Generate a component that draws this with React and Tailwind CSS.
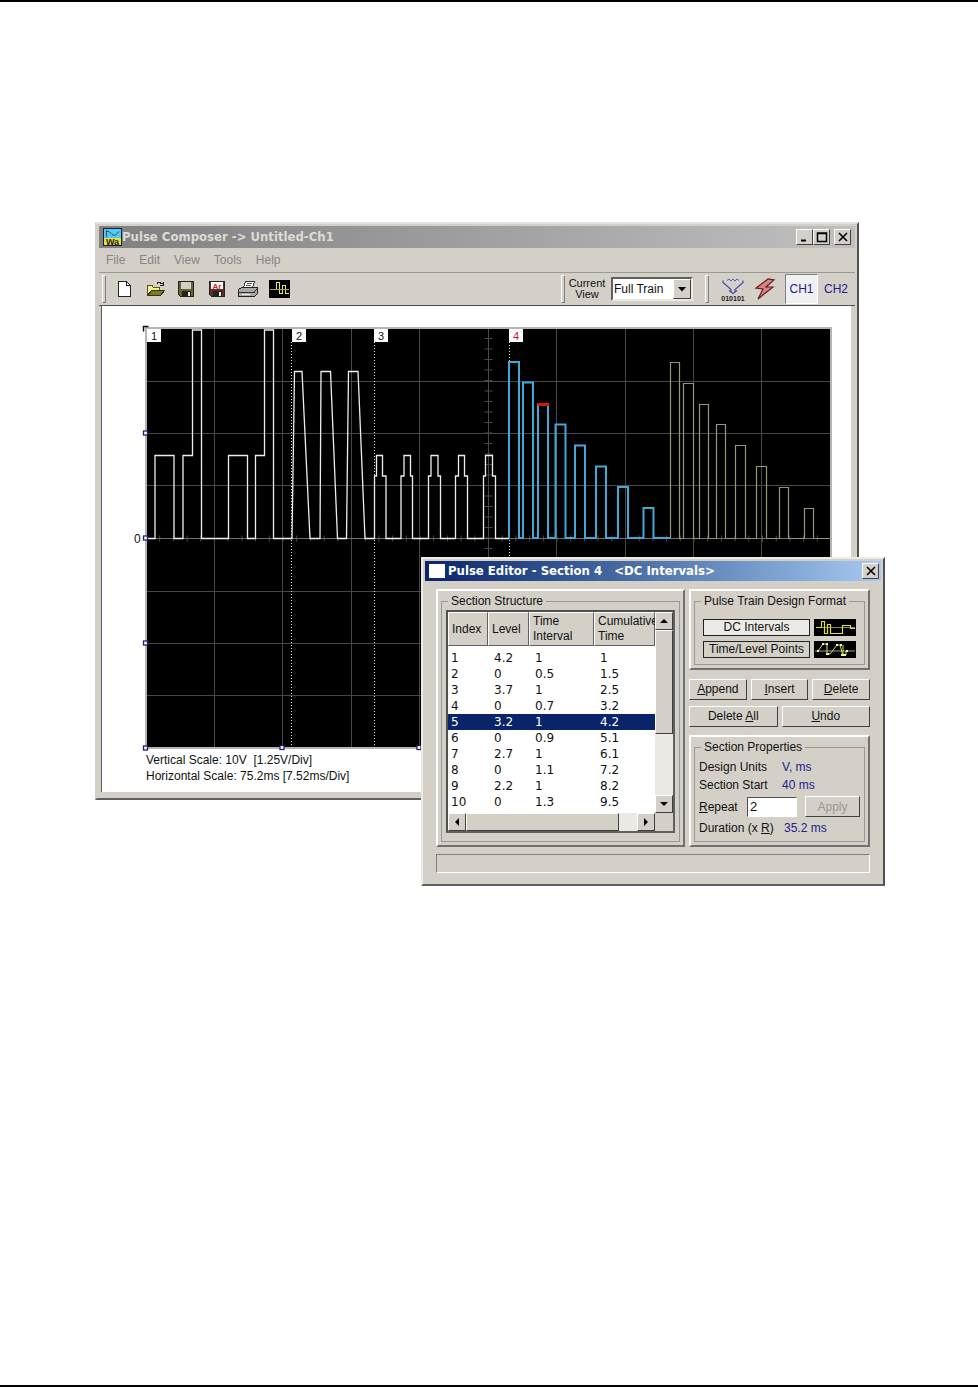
import React from "react";

const raised =
  "border border-t-white border-l-white border-r-[#404040] border-b-[#404040] bg-[#d4d0c8]";

const WHITE_WAVE =
  "M146 538.5H155V455.5H174V538.5H183V455.5H192.5V330H201.5V538.5H228.5V455.5H247.5V538.5H255.5V455.5H264.5V330H273.5V538.5H292L294.5 371.5H302L310 538.5H320L321 371.5H330.5L337.5 538.5H346.5L348.5 371.5H358L365 538.5H374.5V476H376.5V455.5H382.5V476H386V538.5H401V476H404V455.5H410.5V476H412.5V538.5H428.5V476H431V455.5H438V476H440.5V538.5H455.5V476H458.5V455.5H464.5V476H467.5V538.5H483.5V476H485.5V455.5H492.5V476H495.5V538.5H509";
const BLUE_WAVE =
  "M509 538V362H519V538H523V382.5H533V538H538V404.5H548V538H555.5V424.5H565.5V538H575V445.5H585V538H596V466.5H606V538H618V487H628V538H643.5V508H653.5V538H670";
const OLIVE_WAVE =
  "M670.5 538.5V362.5H679.5V538.5H683.5V383.5H693.5V538.5H699.5V404.5H708.5V538.5H716.5V424.5H725.5V538.5H735.5V445.5H745.5V538.5H756.5V466.5H766.5V538.5H779.5V487.5H788.5V538.5H804.5V508.5H813.5V538.5H831";

const gridX = [214.5, 282.5, 351.5, 419.5, 488.5, 556.5, 625.5, 693.5, 761.5];
const gridY = [381.5, 433.5, 485.5, 538.5, 591.5, 643.5, 695.5];
const sections = [
  { n: "1", x: 147 },
  { n: "2", x: 292 },
  { n: "3", x: 374 },
  { n: "4", x: 509 },
];

function Graph() {
  const ticksX = Array.from({ length: 49 }, (_, i) => 146 + (i + 1) * 13.7);
  const ticksY = Array.from({ length: 39 }, (_, i) => 328 + (i + 1) * 10.5);
  return (
    <svg viewBox="130 322 706 430" className="block w-full" role="img" aria-label="Pulse train">
      <rect x="146" y="328" width="685" height="420" fill="#000" />
      <g stroke="#484848" strokeWidth="1">
        {gridX.map((x) => <path key={x} d={`M${x} 329V747`} />)}
        {gridY.map((y) => <path key={y} d={`M147 ${y}H830`} />)}
        {ticksX.map((x) => <path key={x} d={`M${x} 535.5V541.5`} />)}
        {ticksY.map((y) => <path key={y} d={`M484.5 ${y}H492.5`} />)}
      </g>
      <path d="M147 538.5H830" stroke="#707070" />
      <g stroke="#e0e0e0" strokeDasharray="1 2">
        <path d="M291.5 342V747" />
        <path d="M374.5 342V747" />
        <path d="M509.5 342V747" />
      </g>
      <rect x="146" y="328" width="685" height="420" fill="none" stroke="#b4b4b4" strokeWidth="2" />
      <path d={WHITE_WAVE} fill="none" stroke="#ededed" strokeWidth="1.3" />
      <path d={OLIVE_WAVE} fill="none" stroke="#96967a" strokeWidth="1.2" />
      <path d={BLUE_WAVE} fill="none" stroke="#3fa9d8" strokeWidth="2" />
      <path d="M537.5 404.5H549" stroke="#e01010" strokeWidth="3" />
      {sections.map((s) => (
        <g key={s.n}>
          <rect x={s.x} y="329" width="14" height="13" fill="#fff" />
          <text x={s.x + 7} y="340" textAnchor="middle" fontSize="11" fontFamily="Liberation Sans, sans-serif" fill={s.n === "4" ? "#c01848" : "#111"}>
            {s.n}
          </text>
        </g>
      ))}
      <text x="134" y="543" fontSize="12" fontFamily="Liberation Sans, sans-serif" fill="#111">0</text>
      <g fill="#fff" stroke="#20206a" strokeWidth="1.3">
        {[433, 538, 643, 748].map((y) => <rect key={y} x="143.5" y={y - 2} width="4" height="4" />)}
        {[282, 419].map((x) => <rect key={x} x={x - 2} y="745.5" width="4" height="4" />)}
      </g>
      <path d="M143.5 331.5V326.5H148.5" fill="none" stroke="#111" strokeWidth="1.5" />
    </svg>
  );
}

function ToolIcon({ label, children, wide }) {
  return (
    <button type="button" aria-label={label} className={wide ? "h-6 w-6" : "h-6 w-5"}>
      <svg viewBox={wide ? "0 0 24 24" : "0 0 20 24"} className="block h-6 w-full" shapeRendering="crispEdges">
        {children}
      </svg>
    </button>
  );
}

function Grip() {
  return <div className="h-7 w-1 border border-t-white border-l-white border-r-[#808080] border-b-[#808080]" />;
}

function CaptionButton({ label, children }) {
  return (
    <button type="button" aria-label={label} className={`flex h-4 w-[17px] items-center justify-center ${raised}`}>
      <svg viewBox="0 0 12 12" className="h-3 w-3" fill="none" stroke="#000">
        {children}
      </svg>
    </button>
  );
}

function MainWindow() {
  return (
    <section className="border-2 border-t-[#e4e2dc] border-l-[#d4d0c8] border-r-[#505050] border-b-[#606060] bg-[#d4d0c8] p-[2px]">
      <header className="flex h-[22px] items-center bg-linear-to-r from-[#808080] to-[#c0c0c0] pr-1 pl-1">
        <svg viewBox="0 0 19 18" className="h-[18px] w-[19px]">
          <rect width="19" height="18" fill="#102040" />
          <rect x="1" y="1" width="17" height="9" fill="#58c8f0" />
          <rect x="1" y="10" width="17" height="7" fill="#e8e030" />
          <path d="M3.5 2V9M3.5 3.5H6L9 6.5L12 7.5L16 3.5" fill="none" stroke="#205878" />
          <text x="9.5" y="17" textAnchor="middle" fontSize="9" fontWeight="bold" fontFamily="Liberation Sans, sans-serif" fill="#222">Wa</text>
        </svg>
        <h1 className="flex-1 font-['DejaVu_Sans_Condensed','DejaVu_Sans',sans-serif] text-[13px] font-bold whitespace-pre text-[#dedbd4]">
          Pulse Composer -&gt; Untitled-Ch1
        </h1>
        <div className="flex">
          <CaptionButton label="Minimize"><path d="M2 9.5H7" strokeWidth="2" /></CaptionButton>
          <CaptionButton label="Maximize"><path d="M1.5 2H10.5V10.5H1.5ZM1.5 2.5H10.5" strokeWidth="1.5" /></CaptionButton>
          <div className="w-1" />
          <CaptionButton label="Close"><path d="M2 2L10 10M10 2L2 10" strokeWidth="1.6" /></CaptionButton>
        </div>
      </header>
      <nav className="flex h-6 items-center gap-[13px] pl-[7px] text-[12px] text-[#858585]">
        {["File", "Edit", "View", "Tools", "Help"].map((m) => (
          <button key={m} type="button" className="pr-px">{m}</button>
        ))}
      </nav>
      <div className="flex h-[34px] items-center border-t border-b border-t-[#9a9a94] border-b-[#505050] pl-[3px]">
        <Grip />
        <div className="ml-2 flex flex-1 items-center gap-[11px]">
          <ToolIcon label="New">
            <path d="M4.5 4.5H12.5L16.5 8.5V19.5H4.5Z" fill="#fff" stroke="#222" />
            <path d="M12.5 4.5V8.5H16.5" fill="none" stroke="#222" />
          </ToolIcon>
          <ToolIcon label="Open">
            <path d="M2.5 18V8.5H7L8.5 10.5H14.5V13" fill="#f0f090" stroke="#555520" />
            <path d="M2.5 18.5L6.5 13.5H19.5L15.5 18.5Z" fill="#7c7c20" stroke="#333310" />
            <path d="M11.5 6.5H12.5V5.5H15.5V6.5H17.5M18.5 4.5V8.5H14.5" fill="none" stroke="#222" />
          </ToolIcon>
          <ToolIcon label="Save">
            <path d="M2.5 4.5H17.5V19.5H4.5L2.5 17.5Z" fill="#66662c" stroke="#222" />
            <path d="M5 5H15V12H5Z" fill="#d4d0c8" />
            <path d="M6 14H15V20H6Z" fill="#222" />
            <path d="M12 15H14V19H12Z" fill="#eee" />
          </ToolIcon>
          <ToolIcon label="Save as">
            <path d="M2.5 4.5H17.5V19.5H4.5L2.5 17.5Z" fill="#5c3028" stroke="#222" />
            <path d="M4 5H16V12H4Z" fill="#fff" />
            <text x="10" y="12" textAnchor="middle" fontSize="8" fontWeight="bold" fontFamily="Liberation Sans, sans-serif" fill="#d02020">Ar</text>
            <path d="M6 14H15V20H6Z" fill="#222" />
            <path d="M12 15H14V19H12Z" fill="#eee" />
          </ToolIcon>
          <ToolIcon label="Print">
            <path d="M5 11L8 4H17L14 11Z" fill="#fff" stroke="#333" />
            <path d="M9 6.5H14M8 8.5H13" stroke="#555" />
            <path d="M0.5 12.5L3.5 10.5H19.5V16.5L16.5 19.5H0.5Z" fill="#a8a8a8" stroke="#222" />
            <path d="M1 15.5H16L19 12" fill="none" stroke="#333" />
            <path d="M4 17.5H12" stroke="#eee" />
          </ToolIcon>
          <ToolIcon label="Pulse editor" wide>
            <rect x="0" y="3" width="21" height="18" fill="#000" />
            <path d="M1 12.5H7.5V5.5H10.5V16.5H13.5V8.5H16.5V16.5H20" fill="none" stroke="#e8e858" />
            <path d="M1 12.5H20" stroke="#a8a850" />
          </ToolIcon>
        </div>
        <Grip />
        <label htmlFor="view" className="ml-[2px] w-10 text-center text-[11px] leading-[11px]">Current View</label>
        <div className="relative mr-3 ml-1 h-6 w-[82px] border-2 border-t-[#606060] border-l-[#606060] border-r-[#eceae4] border-b-[#eceae4] bg-white">
          <select id="view" className="block h-5 w-full appearance-none bg-transparent pl-px text-[12px] leading-5 outline-none">
            <option>Full Train</option>
          </select>
          <span className={`pointer-events-none absolute top-0 right-0 flex h-5 w-[18px] items-center justify-center ${raised}`}>
            <svg viewBox="0 0 8 5" className="h-[5px] w-2"><path d="M0 0H8L4 4.5Z" /></svg>
          </span>
        </div>
        <Grip />
        <button type="button" aria-label="Digital output" className="ml-3 h-6 w-6">
          <svg viewBox="0 0 24 24" className="h-6 w-6">
            <path d="M6 3.5L8 2L10 4L12 2L14 4L16 2L18 3.5" fill="none" stroke="#5060c0" />
            <path d="M2 3.5V5.5L10 12.5V15M22 3.5V5.5L14 12.5V15M8 13.5L12 16.5L16 13.5" fill="none" stroke="#4848a8" strokeWidth="1.2" />
            <text x="12" y="23.5" textAnchor="middle" fontSize="7" fontWeight="bold" fontFamily="Liberation Sans, sans-serif" fill="#222">010101</text>
          </svg>
        </button>
        <button type="button" aria-label="Trigger" className="ml-2 h-6 w-6">
          <svg viewBox="0 0 24 24" className="h-6 w-6">
            <path d="M15 2L3 11L10 12L5 22L20 10L13 10L21 3Z" fill="#e08080" stroke="#5c2020" strokeWidth="1.2" />
          </svg>
        </button>
        <button type="button" className="ml-2 h-[30px] w-[33px] border border-t-[#808080] border-l-[#808080] border-r-white border-b-white bg-[#f0eff2] text-[12px] text-[#20208c]">CH1</button>
        <button type="button" className="mr-[7px] ml-[6px] text-[12px] text-[#20208c]">CH2</button>
      </div>
      <div className="mr-1 mb-1 ml-[2px] border-l border-l-[#606060] bg-white pt-4 pr-[15px] pb-2 pl-7">
        <Graph />
        <div className="pl-4 text-[12px] leading-4 whitespace-pre">
          <p>Vertical Scale: 10V  [1.25V/Div]</p>
          <p>Horizontal Scale: 75.2ms [7.52ms/Div]</p>
        </div>
      </div>
    </section>
  );
}

const rows = [
  ["1", "4.2", "1", "1"],
  ["2", "0", "0.5", "1.5"],
  ["3", "3.7", "1", "2.5"],
  ["4", "0", "0.7", "3.2"],
  ["5", "3.2", "1", "4.2"],
  ["6", "0", "0.9", "5.1"],
  ["7", "2.7", "1", "6.1"],
  ["8", "0", "1.1", "7.2"],
  ["9", "2.2", "1", "8.2"],
  ["10", "0", "1.3", "9.5"],
];

function Group({ title, children }) {
  return (
    <div className="border-2 border-t-white border-l-white border-r-[#707070] border-b-[#707070] p-[3px]">
      <fieldset className="border border-[#989894]">
        <legend className="ml-[6px] px-[3px] text-[12px] leading-[14px]">{title}</legend>
        {children}
      </fieldset>
    </div>
  );
}

function ScrollButton({ label, d }) {
  return (
    <button type="button" aria-label={label} className={`flex h-[18px] w-[18px] shrink-0 items-center justify-center ${raised}`}>
      <svg viewBox="0 0 8 8" className="h-2 w-2"><path d={d} /></svg>
    </button>
  );
}

function SectionTable() {
  const head = "border-r border-b border-r-[#606060] border-b-[#606060] border-t border-l border-t-white border-l-white p-0 pl-[3px] text-left font-normal";
  return (
    <div className="mx-1 mt-[2px] mb-2 border-2 border-t-[#505050] border-l-[#505050] border-r-[#606060] border-b-[#606060] bg-white">
      <div className="flex">
        <div className="min-w-0 flex-1 overflow-hidden pb-[3px]">
          <table className="w-full table-fixed border-separate border-spacing-0 text-[12px]">
            <colgroup>
              <col className="w-10" />
              <col className="w-[41px]" />
              <col className="w-[65px]" />
              <col />
            </colgroup>
            <thead className="bg-[#d4d0c8] leading-[15px]">
              <tr className="h-[34px]">
                <th className={head}>Index</th>
                <th className={head}>Level</th>
                <th className={head}>Time<br />Interval</th>
                <th className={head}>Cumulative<br />Time</th>
              </tr>
            </thead>
            <tbody className="font-['DejaVu_Sans',sans-serif] leading-4">
              <tr className="h-1"><td colSpan={4} className="h-1 p-0" /></tr>
              {rows.map((r) => (
                <tr key={r[0]} className={r[0] === "5" ? "bg-[#0a246a] text-white" : ""}>
                  <td className="p-0 pl-[3px]">{r[0]}</td>
                  <td className="p-0 pl-[6px]">{r[1]}</td>
                  <td className="p-0 pl-[6px]">{r[2]}</td>
                  <td className="p-0 pl-[6px]">{r[3]}</td>
                </tr>
              ))}
            </tbody>
          </table>
        </div>
        <div className="flex w-[18px] flex-col bg-[#ebe9e4]">
          <ScrollButton label="Scroll up" d="M0 6H8L4 2Z" />
          <div className={`h-[104px] ${raised}`} />
          <div className="flex-1" />
          <ScrollButton label="Scroll down" d="M0 2H8L4 6Z" />
        </div>
      </div>
      <div className="flex bg-[#ebe9e4]">
        <ScrollButton label="Scroll left" d="M6 0V8L2 4Z" />
        <div className={`w-[153px] ${raised}`} />
        <div className="flex-1" />
        <ScrollButton label="Scroll right" d="M2 0V8L6 4Z" />
        <div className="w-[18px] bg-[#d4d0c8]" />
      </div>
    </div>
  );
}

function PushButton({ children }) {
  return <button type="button" className={`h-[21px] flex-1 text-[12px] leading-4 ${raised}`}>{children}</button>;
}

function EditorDialog() {
  return (
    <section className="border-2 border-t-[#ecebe6] border-l-[#ecebe6] border-r-[#505050] border-b-[#606060] bg-[#d4d0c8] p-[2px]">
      <header className="flex h-5 items-center bg-linear-to-r from-[#0a246a] to-[#a6caf0] pr-[2px] pl-1">
        <span className="mr-[3px] h-[14px] w-4 bg-white" />
        <h2 className="flex-1 font-['DejaVu_Sans_Condensed','DejaVu_Sans',sans-serif] text-[13px] font-bold whitespace-pre text-white">
          Pulse Editor - Section 4   &lt;DC Intervals&gt;
        </h2>
        <CaptionButton label="Close dialog"><path d="M2 2L10 10M10 2L2 10" strokeWidth="1.6" /></CaptionButton>
      </header>
      <div className="flex gap-1 px-[11px] pt-2">
        <div className="min-w-0 flex-1">
          <Group title="Section Structure"><SectionTable /></Group>
        </div>
        <div className="flex w-[181px] flex-col justify-between">
          <Group title="Pulse Train Design Format">
            <div className="flex flex-col gap-[5px] px-2 pt-[11px] pb-[6px]">
              <div className="flex items-center gap-1">
                <button type="button" className="h-[17px] flex-1 border border-[#222] bg-[#ebeae7] text-[12px] leading-[15px]">DC Intervals</button>
                <svg viewBox="0 0 42 17" className="h-[17px] w-[42px]">
                  <rect width="42" height="17" fill="#000" />
                  <path d="M2 8.5H41" stroke="#888860" />
                  <path d="M2 8.5H7.5V2.5H10.5V14.5H13.5V5.5H16.5V14.5H28.5V6.5H36.5V9.5H41" fill="none" stroke="#dede40" strokeWidth="1.2" />
                </svg>
              </div>
              <div className="flex items-center gap-1">
                <button type="button" className="h-[17px] flex-1 border border-[#222] text-[12px] leading-[15px] whitespace-nowrap">Time/Level Points</button>
                <svg viewBox="0 0 42 17" className="h-[17px] w-[42px]">
                  <rect width="42" height="17" fill="#000" />
                  <path d="M1 10H41" stroke="#999" />
                  <path d="M4 10L9 3H13V13H16L23 4H26L29 15M29 4V15M32 10V14" fill="none" stroke="#dede40" />
                  <path d="M3 9h2v2H3zM8 2h2v2H8zM12 2h2v2h-2zM12 12h3v2h-3zM22 3h2v2h-2zM26 3h2v2h-2zM27 13h5v2h-5zM32 9h2v2h-2z" fill="#f0f0b0" />
                </svg>
              </div>
            </div>
          </Group>
          <div className="flex flex-col gap-[6px]">
            <div className="flex gap-1">
              <PushButton><u>A</u>ppend</PushButton>
              <PushButton><u>I</u>nsert</PushButton>
              <PushButton><u>D</u>elete</PushButton>
            </div>
            <div className="flex gap-1">
              <PushButton>Delete <u>A</u>ll</PushButton>
              <PushButton><u>U</u>ndo</PushButton>
            </div>
          </div>
          <Group title="Section Properties">
            <div className="px-1 pb-1 text-[12px] leading-[18px]">
              <p className="flex pt-1"><span className="w-[83px]">Design Units</span><span className="text-[#20208c]">V, ms</span></p>
              <p className="flex"><span className="w-[83px]">Section Start</span><span className="text-[#20208c]">40 ms</span></p>
              <div className="flex items-center pt-[2px] pb-[2px]">
                <label htmlFor="repeat" className="w-12"><u>R</u>epeat</label>
                <input id="repeat" defaultValue="2" className="h-5 w-[50px] border border-t-[#505050] border-l-[#505050] border-r-white border-b-white bg-white pl-[2px] text-[13px]" />
                <button type="button" disabled className={`ml-2 h-[21px] flex-1 text-[12px] leading-4 text-[#9a9a96] ${raised}`}>Apply</button>
              </div>
              <p className="flex"><span className="w-[85px] whitespace-nowrap">Duration (x <u>R</u>)</span><span className="text-[#20208c]">35.2 ms</span></p>
            </div>
          </Group>
        </div>
      </div>
      <div className="mx-[11px] mt-[7px] mb-[9px] h-[19px] border border-t-[#808080] border-l-[#808080] border-r-white border-b-white" />
    </section>
  );
}

export default function App() {
  return (
    <main className="flex min-h-screen flex-col border-t-2 border-b-2 border-black bg-white pt-[220px] pr-[119px] pl-[95px] font-['Liberation_Sans',Arial,sans-serif] text-[#111]">
      <div className="relative">
        <MainWindow />
        <div className="absolute top-[335px] -right-[26px] w-[464px]">
          <EditorDialog />
        </div>
      </div>
    </main>
  );
}
